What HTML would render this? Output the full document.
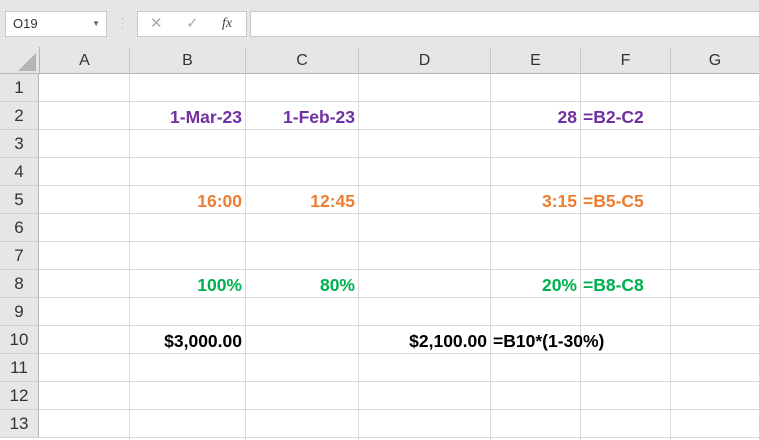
<!DOCTYPE html>
<html><head><style>
body{margin:0;width:759px;height:440px;overflow:hidden;background:#fff;font-family:"Liberation Sans",sans-serif;position:relative}
.tb{position:absolute;left:0;top:0;width:759px;height:47px;background:#e6e6e6}
.box{position:absolute;background:#fff;border:1px solid #c8c8c8;box-sizing:border-box}
.hdr{position:absolute;top:47px;height:27px;background:#e6e6e6;border-bottom:1px solid #b5b5b5;box-sizing:border-box;font-size:16px;color:#333;text-align:center;line-height:27px}
.rh{position:absolute;left:0;width:39px;height:28px;background:#e6e6e6;border-right:1px solid #b5b5b5;border-bottom:1px solid #d0d0d0;box-sizing:border-box;font-size:17px;color:#333;text-align:center;line-height:28px}
.vl{position:absolute;top:74px;bottom:0;width:1px;background:#d9d9d9}
.hl{position:absolute;left:39px;right:0;height:1px;background:#d9d9d9}
.c{position:absolute;font-weight:bold;font-size:17.5px;line-height:28px;white-space:nowrap}
.p{color:#7030a0}.o{color:#ed7d31}.g{color:#00b050}.k{color:#000}
</style></head><body>
<div class="tb"></div>
<div class="box" style="left:5px;top:11px;width:102px;height:26px;font-size:13px;line-height:24px;padding-left:7px;color:#333">O19<span style="position:absolute;right:6px;top:0;font-size:8px;color:#666">▼</span></div>
<div style="position:absolute;left:121px;top:16px;color:#aaa;font-size:10px;line-height:5px">·<br>·<br>·</div>
<div class="box" style="left:137px;top:11px;width:110px;height:26px;color:#aaa;font-size:15px;line-height:24px"><span style="position:absolute;left:12px">✕</span><span style="position:absolute;left:48px">✓</span><span style="position:absolute;left:84px;color:#444;font-style:italic;font-family:'Liberation Serif',serif;font-size:14px">fx</span></div>
<div class="box" style="left:250px;top:11px;width:515px;height:26px"></div>
<div class="hdr" style="left:0;width:759px"></div>
<div style="position:absolute;left:18px;top:53px;width:0;height:0;border-left:18px solid transparent;border-bottom:18px solid #b4b4b4"></div>
<div class="hdr" style="left:39px;width:90px;border-left:1px solid #b5b5b5">A</div>
<div class="hdr" style="left:129px;width:116px;border-left:1px solid #c8c8c8">B</div>
<div class="hdr" style="left:245px;width:113px;border-left:1px solid #c8c8c8">C</div>
<div class="hdr" style="left:358px;width:132px;border-left:1px solid #c8c8c8">D</div>
<div class="hdr" style="left:490px;width:90px;border-left:1px solid #c8c8c8">E</div>
<div class="hdr" style="left:580px;width:90px;border-left:1px solid #c8c8c8">F</div>
<div class="hdr" style="left:670px;width:89px;border-left:1px solid #c8c8c8">G</div>
<div class="vl" style="left:129px"></div><div class="vl" style="left:245px"></div><div class="vl" style="left:358px"></div><div class="vl" style="left:490px"></div><div class="vl" style="left:580px"></div><div class="vl" style="left:670px"></div>
<div class="rh" style="top:74px">1</div><div class="hl" style="top:101px"></div>
<div class="rh" style="top:102px">2</div><div class="hl" style="top:129px"></div>
<div class="rh" style="top:130px">3</div><div class="hl" style="top:157px"></div>
<div class="rh" style="top:158px">4</div><div class="hl" style="top:185px"></div>
<div class="rh" style="top:186px">5</div><div class="hl" style="top:213px"></div>
<div class="rh" style="top:214px">6</div><div class="hl" style="top:241px"></div>
<div class="rh" style="top:242px">7</div><div class="hl" style="top:269px"></div>
<div class="rh" style="top:270px">8</div><div class="hl" style="top:297px"></div>
<div class="rh" style="top:298px">9</div><div class="hl" style="top:325px"></div>
<div class="rh" style="top:326px">10</div><div class="hl" style="top:353px"></div>
<div class="rh" style="top:354px">11</div><div class="hl" style="top:381px"></div>
<div class="rh" style="top:382px">12</div><div class="hl" style="top:409px"></div>
<div class="rh" style="top:410px">13</div><div class="hl" style="top:437px"></div>
<div class="c p" style="right:517px;top:103px">1-Mar-23</div>
<div class="c p" style="right:404px;top:103px">1-Feb-23</div>
<div class="c p" style="right:182px;top:103px">28</div>
<div class="c p" style="left:583px;top:103px">=B2-C2</div>
<div class="c o" style="right:517px;top:187px">16:00</div>
<div class="c o" style="right:404px;top:187px">12:45</div>
<div class="c o" style="right:182px;top:187px">3:15</div>
<div class="c o" style="left:583px;top:187px">=B5-C5</div>
<div class="c g" style="right:517px;top:271px">100%</div>
<div class="c g" style="right:404px;top:271px">80%</div>
<div class="c g" style="right:182px;top:271px">20%</div>
<div class="c g" style="left:583px;top:271px">=B8-C8</div>
<div class="c k" style="right:517px;top:327px">$3,000.00</div>
<div class="c k" style="right:272px;top:327px">$2,100.00</div>
<div class="c k" style="left:493px;top:327px">=B10*(1-30%)</div>
</body></html>
